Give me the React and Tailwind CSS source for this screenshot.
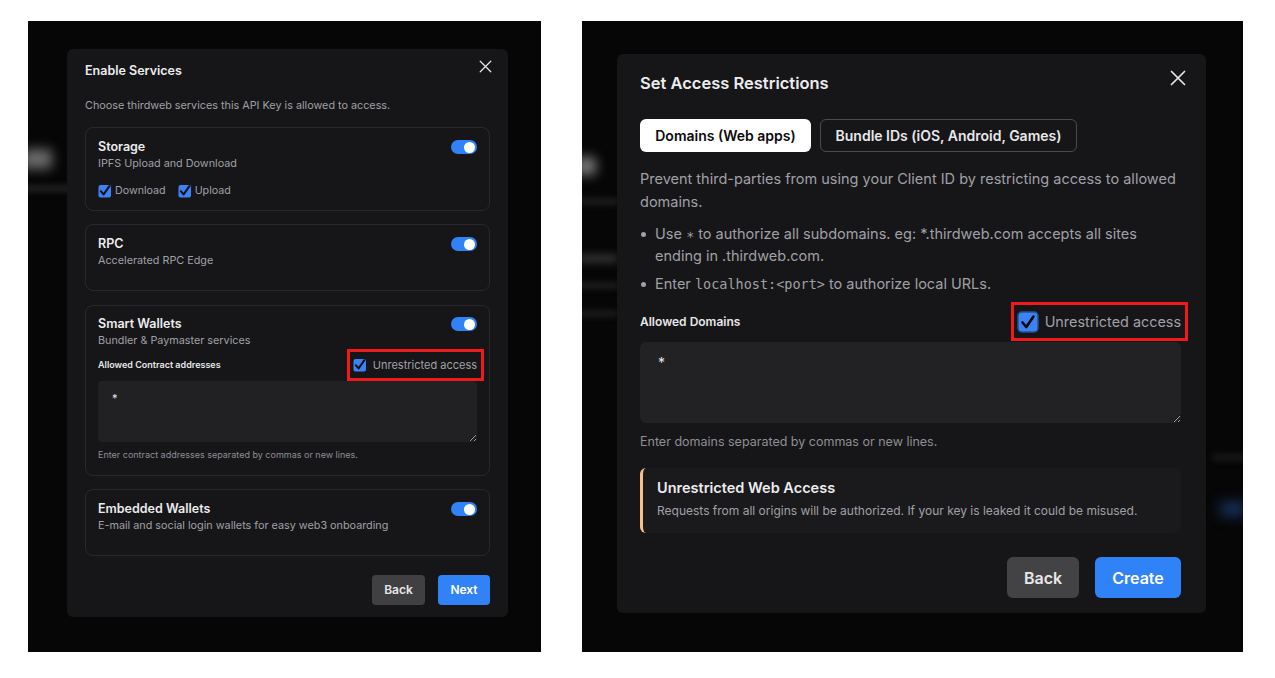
import React from "react";

function XIcon({ size, stroke = 1.6 }) {
  return (
    <svg width={size} height={size} viewBox="0 0 16 16" fill="none">
      <path d="M1.5 1.5 L14.5 14.5 M14.5 1.5 L1.5 14.5" stroke="#e8e8ea" strokeWidth={stroke} strokeLinecap="round" />
    </svg>
  );
}

function SmallCheck() {
  return (
    <svg width="14" height="14" viewBox="0 0 14 14" className="shrink-0">
      <rect x="0.5" y="1" width="12.5" height="12.5" rx="2" fill="#3b82f6" />
      <path d="M2.8 7.2 L5.6 10.4 L11.4 2.2" stroke="#0e0e10" strokeWidth="2" fill="none" strokeLinecap="round" strokeLinejoin="round" />
    </svg>
  );
}

function BigCheck() {
  return (
    <svg width="22" height="22" viewBox="0 0 22 22" className="shrink-0">
      <rect x="1" y="1" width="20" height="20" rx="4" fill="#3b82f6" stroke="#2a4f8a" strokeWidth="1.5" />
      <path d="M5.5 11.5 L9.3 16 L16.5 5.5" stroke="#050507" strokeWidth="2.6" fill="none" strokeLinecap="round" strokeLinejoin="round" />
    </svg>
  );
}

function Toggle() {
  return (
    <div className="w-[26px] h-[14px] rounded-full bg-[#3182f6] flex items-center justify-end pr-[2px] shrink-0">
      <div className="w-[11px] h-[11px] rounded-full bg-white" />
    </div>
  );
}

function ServiceHeader({ title, desc }) {
  return (
    <div className="flex items-start justify-between">
      <div>
        <div className="text-[12.5px] leading-[16px] font-semibold text-[#ececef]">{title}</div>
        <div className="mt-[2px] text-[10.8px] leading-[14px] text-[#a0a0a7]">{desc}</div>
      </div>
      <div className="mt-[1px]">
        <Toggle />
      </div>
    </div>
  );
}

function LeftModal() {
  return (
    <div className="w-[441px] h-[568px] bg-[#161618] rounded-[6px] px-[18px] flex flex-col">
      <div className="flex items-start justify-between mt-[14px]">
        <div className="text-[12.5px] leading-[16px] font-semibold text-[#ececef]">Enable Services</div>
        <div className="-mt-[3px] -mr-[2px]">
          <XIcon size={13} stroke={1.5} />
        </div>
      </div>
      <div className="mt-[20px] text-[10.8px] leading-[14px] text-[#a0a0a7]">
        Choose thirdweb services this API Key is allowed to access.
      </div>

      <div className="mt-[14px] flex flex-col">
        {/* Storage */}
        <div className="border border-[#29292d] rounded-[8px] px-[12px] pt-[11px] pb-[12px]">
          <ServiceHeader title="Storage" desc="IPFS Upload and Download" />
          <div className="mt-[13px] h-[14px] flex items-center gap-[12px] text-[10.7px] text-[#a0a0a7]">
            <div className="flex items-center gap-[3px]">
              <SmallCheck />
              <span>Download</span>
            </div>
            <div className="flex items-center gap-[3px]">
              <SmallCheck />
              <span>Upload</span>
            </div>
          </div>
        </div>

        {/* RPC */}
        <div className="mt-[13px] h-[67px] border border-[#29292d] rounded-[8px] px-[12px] pt-[11px]">
          <ServiceHeader title="RPC" desc="Accelerated RPC Edge" />
        </div>

        {/* Smart Wallets */}
        <div className="mt-[14px] border border-[#29292d] rounded-[8px] px-[12px] pt-[10px] pb-[14px]">
          <ServiceHeader title="Smart Wallets" desc="Bundler & Paymaster services" />
          <div className="mt-[1px] h-[32px] flex items-center justify-between">
            <div className="text-[9px] font-semibold text-[#e6e6e9]">Allowed Contract addresses</div>
            <div className="h-[32px] -mr-[7px] border-[3px] border-[#f0191c] flex items-center gap-[6px] pl-[3px] pr-[4px]">
              <SmallCheck />
              <span className="text-[11px] text-[#a0a0a7]">Unrestricted access</span>
            </div>
          </div>
          <textarea
            readOnly
            value="*"
            className="block w-full h-[61px] bg-[#212124] rounded-[4px] px-[14px] pt-[10px] text-[11px] leading-[14px] text-[#e6e6e9] resize-y outline-none [color-scheme:dark] font-['Inter',sans-serif]"
          />
          <div className="mt-[7px] text-[9px] leading-[12px] text-[#8e8e95]">
            Enter contract addresses separated by commas or new lines.
          </div>
        </div>

        {/* Embedded Wallets */}
        <div className="mt-[13px] h-[67px] border border-[#29292d] rounded-[8px] px-[12px] pt-[11px]">
          <ServiceHeader title="Embedded Wallets" desc="E-mail and social login wallets for easy web3 onboarding" />
        </div>
      </div>

      <div className="mt-[19px] flex justify-end gap-[13px]">
        <div className="w-[53px] h-[30px] rounded-[4px] bg-[#404043] flex items-center justify-center text-[12px] font-semibold text-[#e8e8ea]">
          Back
        </div>
        <div className="w-[52px] h-[30px] rounded-[4px] bg-[#3182f6] flex items-center justify-center text-[12px] font-semibold text-white">
          Next
        </div>
      </div>
    </div>
  );
}

function RightModal() {
  const mono = "font-['DejaVu_Sans_Mono',monospace] text-[13.5px]";
  return (
    <div className="w-[589px] h-[559px] bg-[#161618] rounded-[6px] pl-[23px] pr-[25px] flex flex-col">
      <div className="flex items-start justify-between mt-[19px]">
        <div className="text-[16.5px] leading-[20px] font-semibold text-[#ececef]">Set Access Restrictions</div>
        <div className="-mt-[3px] -mr-[5px]">
          <XIcon size={16} stroke={1.7} />
        </div>
      </div>

      <div className="mt-[26px] flex gap-[9px]">
        <div className="w-[171px] h-[33px] rounded-[6px] bg-white flex items-center justify-center text-[14px] font-semibold text-[#0b0b0c]">
          Domains (Web apps)
        </div>
        <div className="w-[257px] h-[33px] rounded-[6px] border border-[#4a4a50] flex items-center justify-center text-[14px] font-semibold text-[#e8e8ea]">
          Bundle IDs (iOS, Android, Games)
        </div>
      </div>

      <div className="mt-[15px] text-[14.5px] leading-[23px] text-[#a0a0a7] whitespace-nowrap">
        Prevent third-parties from using your Client ID by restricting access to allowed
        <br />
        domains.
      </div>

      <div className="mt-[10px] flex flex-col gap-[6px] text-[14.5px] leading-[22px] text-[#a0a0a7] whitespace-nowrap">
        <div className="flex">
          <div className="w-[15px] shrink-0 flex justify-start pl-[1px] pt-[9px]">
            <div className="w-[5px] h-[5px] rounded-full bg-[#a0a0a7]" />
          </div>
          <div>
            Use <span className={mono}>∗</span> to authorize all subdomains. eg: *.thirdweb.com accepts all sites
            <br />
            ending in .thirdweb.com.
          </div>
        </div>
        <div className="flex">
          <div className="w-[15px] shrink-0 flex justify-start pl-[1px] pt-[9px]">
            <div className="w-[5px] h-[5px] rounded-full bg-[#a0a0a7]" />
          </div>
          <div>
            Enter <span className={mono}>localhost:&lt;port&gt;</span> to authorize local URLs.
          </div>
        </div>
      </div>

      <div className="mt-[7px] h-[39px] flex items-center justify-between">
        <div className="text-[12px] font-semibold text-[#e6e6e9]">Allowed Domains</div>
        <div className="h-[39px] -mr-[7px] border-[3px] border-[#f0191c] flex items-center gap-[6px] pl-[3px] pr-[4px]">
          <BigCheck />
          <span className="text-[14.4px] text-[#a0a0a7]">Unrestricted access</span>
        </div>
      </div>

      <textarea
        readOnly
        value="*"
        className="mt-[1px] block w-full h-[81px] bg-[#222225] rounded-[6px] px-[18px] pt-[11px] text-[14px] leading-[20px] text-[#e6e6e9] resize-y outline-none [color-scheme:dark] font-['Inter',sans-serif]"
      />

      <div className="mt-[11px] text-[12.5px] leading-[16px] text-[#8e8e95]">
        Enter domains separated by commas or new lines.
      </div>

      <div className="mt-[18px] h-[65px] rounded-[6px] bg-[#1a1a1d] border-l-[3px] border-[#f6c08c] pl-[14px] pt-[10px]">
        <div className="text-[14.5px] leading-[20px] font-semibold text-[#ececef]">Unrestricted Web Access</div>
        <div className="mt-[5px] text-[12px] leading-[16px] text-[#a0a0a7]">
          Requests from all origins will be authorized. If your key is leaked it could be misused.
        </div>
      </div>

      <div className="mt-[24px] flex justify-end gap-[16px]">
        <div className="w-[72px] h-[41px] rounded-[6px] bg-[#434346] flex items-center justify-center text-[16px] font-semibold text-[#e8e8ea]">
          Back
        </div>
        <div className="w-[86px] h-[41px] rounded-[6px] bg-[#2f83f7] flex items-center justify-center text-[16px] font-semibold text-white">
          Create
        </div>
      </div>
    </div>
  );
}

export default function App() {
  return (
    <div className="w-[1275px] h-[678px] bg-white flex items-start gap-[41px] pl-[28px] pt-[21px] font-['Inter',sans-serif]">
      {/* Left panel */}
      <div className="relative w-[513px] h-[631px] bg-[#060606] overflow-hidden pl-[39px] pt-[28px]">
        <div className="absolute left-[-6px] top-[128px] w-[30px] h-[20px] rounded bg-[#6a6a6a] blur-[6px]" />
        <div className="absolute left-[-4px] top-[165px] w-[60px] h-[5px] bg-[#2a2a2a] blur-[3px]" />
        <div className="relative">
          <LeftModal />
        </div>
      </div>

      {/* Right panel */}
      <div className="relative w-[661px] h-[631px] bg-[#060606] overflow-hidden pl-[35px] pt-[33px]">
        <div className="absolute left-[-6px] top-[136px] w-[20px] h-[18px] rounded bg-[#7a7a7a] blur-[6px]" />
        <div className="absolute left-[-4px] top-[178px] w-[40px] h-[5px] bg-[#262626] blur-[3px]" />
        <div className="absolute left-[-4px] top-[234px] w-[40px] h-[7px] bg-[#3c3c3c] blur-[4px]" />
        <div className="absolute left-[-4px] top-[262px] w-[40px] h-[5px] bg-[#262626] blur-[3px]" />
        <div className="absolute left-[-4px] top-[290px] w-[40px] h-[5px] bg-[#222] blur-[3px]" />
        <div className="absolute left-[630px] top-[434px] w-[40px] h-[5px] bg-[#1e1e1e] blur-[3px]" />
        <div className="absolute left-[638px] top-[482px] w-[26px] h-[12px] rounded bg-[#1d3a70] blur-[7px]" />
        <div className="relative">
          <RightModal />
        </div>
      </div>
    </div>
  );
}
